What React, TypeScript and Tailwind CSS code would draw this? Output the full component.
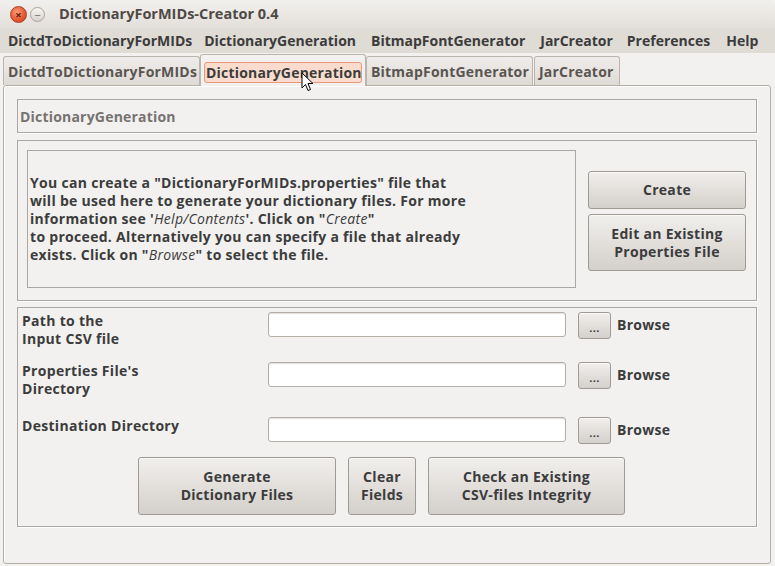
import React from "react";

const btn =
  "flex flex-col items-center justify-center rounded-[3px] border border-[#9f9a94] bg-gradient-to-b from-[#f1efed] to-[#d4d0cb] text-[#3c3c3c] font-bold text-[14px] tracking-[0.3px] leading-[18px] shadow-[inset_0_1px_0_#fbfaf9]";

const Field = ({ label }: { label: React.ReactNode }) => (
  <div className="flex items-start">
    <div className="w-[250px] pl-[4px] text-[14px] tracking-[0.3px] leading-[18px] font-bold text-[#3c3c3c]">{label}</div>
    <div className="w-[298px] h-[25px] rounded-[3px] border border-[#b5aea6] bg-white shadow-[inset_0_1px_1px_#e4e0dc]" />
    <div className={`${btn} ml-[12px] w-[33px] h-[27px] !text-[11px] !leading-[11px] pt-[4px]`}>...</div>
    <div className="ml-[6px] text-[14px] tracking-[0.3px] leading-[25px] font-bold text-[#3c3c3c]">Browse</div>
  </div>
);

export default function App() {
  return (
    <div className="relative w-[775px] h-[566px] overflow-hidden bg-[#f2f1f0] font-['Open_Sans',sans-serif] flex flex-col">
      {/* title bar */}
      <div className="h-[28px] flex items-center bg-gradient-to-b from-[#f2f0ee] to-[#e3dfda] rounded-tr-[6px]">
        <div className="ml-[10px] w-[17px] h-[17px] rounded-full border border-[#a8412a] bg-[radial-gradient(circle_at_40%_35%,#fb9a78,#e4572e_60%,#c9401d)] flex items-center justify-center text-[#5a2010] text-[11px] leading-none font-bold">×</div>
        <div className="ml-[3px] w-[15px] h-[15px] rounded-full border border-[#aaa39b] bg-gradient-to-b from-[#f7f6f4] to-[#d7d2cc] flex items-center justify-center text-[#6a645d] text-[11px] leading-none">−</div>
        <div className="ml-[14px] text-[14.5px] font-bold text-[#4f4a45]">DictionaryForMIDs-Creator 0.4</div>
      </div>
      {/* menu bar */}
      <div className="h-[25px] flex items-center bg-[#dfdbd5] text-[14px] font-bold text-[#3c3c3c]">
        <span className="ml-[8px]">DictdToDictionaryForMIDs</span>
        <span className="ml-[12px]">DictionaryGeneration</span>
        <span className="ml-[15px]">BitmapFontGenerator</span>
        <span className="ml-[15px]">JarCreator</span>
        <span className="ml-[14px]">Preferences</span>
        <span className="ml-[16px]">Help</span>
      </div>
      {/* tabs */}
      <div className="h-[32px] flex items-end pl-[3px] text-[14px] tracking-[0.2px] font-bold text-[#5a5550]">
        <div className="w-[197px] h-[29px] flex items-center pl-[4px] rounded-t-[3px] border border-b-0 border-[#bbb5ad] bg-gradient-to-b from-[#efedeb] to-[#dedad6]">DictdToDictionaryForMIDs</div>
        <div className="w-[166px] h-[32px] pt-[7px] px-[3px] rounded-t-[3px] border border-b-0 border-[#bbb5ad] bg-[#f2f1f0] relative top-[1px]">
          <div className="h-[21px] flex items-center pl-[1px] rounded-[3px] border border-[#e7997a] bg-[#f9dccd] text-[#3c3c3c]">DictionaryGeneration</div>
        </div>
        <div className="w-[167px] h-[29px] flex items-center pl-[4px] rounded-t-[3px] border border-b-0 border-[#bbb5ad] bg-gradient-to-b from-[#efedeb] to-[#dedad6]">BitmapFontGenerator</div>
        <div className="w-[86px] h-[29px] ml-[1px] flex items-center pl-[4px] rounded-t-[3px] border border-b-0 border-[#bbb5ad] bg-gradient-to-b from-[#efedeb] to-[#dedad6]">JarCreator</div>
      </div>
      {/* tab panel */}
      <div className="ml-[3px] mr-[4px] h-[479px] border border-[#b4aea6] rounded-[3px] shadow-[inset_1px_1px_0_#ffffff] px-[13px] pt-[13px]">
        <div className="h-[34px] border border-[#a9a8a6] shadow-[1px_1px_0_#ffffff] flex items-center pl-[2px] text-[14px] tracking-[0.2px] font-bold text-[#767370]">DictionaryGeneration</div>

        <div className="mt-[7px] h-[161px] border border-[#a9a8a6] shadow-[1px_1px_0_#ffffff] flex items-start pl-[9px] pt-[9px]">
          <div className="w-[549px] h-[138px] border border-[#a9a8a6] flex items-center pl-[2px] text-[14px] tracking-[0.3px] leading-[18px] font-bold text-[#3c3c3c]">
            <p>
              You can create a "DictionaryForMIDs.properties" file that<br />
              will be used here to generate your dictionary files. For more<br />
              information see '<i className="font-normal">Help/Contents</i>'. Click on "<i className="font-normal">Create</i>"<br />
              to proceed. Alternatively you can specify a file that already<br />
              exists. Click on "<i className="font-normal">Browse</i>" to select the file.
            </p>
          </div>
          <div className="ml-[12px] mt-[21px] flex flex-col gap-[5px]">
            <div className={`${btn} w-[158px] h-[38px]`}>Create</div>
            <div className={`${btn} w-[158px] h-[57px]`}>
              <span>Edit an Existing</span>
              <span>Properties File</span>
            </div>
          </div>
        </div>

        <div className="mt-[6px] h-[220px] border border-[#a9a8a6] shadow-[1px_1px_0_#ffffff] pt-[4px]">
          <Field label={<>Path to the<br />Input CSV file</>} />
          <div className="mt-[14px]">
            <Field label={<>Properties File's<br />Directory</>} />
          </div>
          <div className="mt-[19px]">
            <Field label="Destination Directory" />
          </div>
          <div className="mt-[13px] ml-[120px] flex gap-[12px]">
            <div className={`${btn} w-[198px] h-[58px]`}>
              <span>Generate</span>
              <span>Dictionary Files</span>
            </div>
            <div className={`${btn} w-[68px] h-[58px]`}>
              <span>Clear</span>
              <span>Fields</span>
            </div>
            <div className={`${btn} w-[197px] h-[58px]`}>
              <span>Check an Existing</span>
              <span>CSV-files Integrity</span>
            </div>
          </div>
        </div>
      </div>
      {/* mouse pointer */}
      <svg className="absolute left-[301px] top-[72px]" width="13" height="21" viewBox="0 0 13 21">
        <path d="M1 1 L1 16 L4.5 12.5 L7 18.5 L9.5 17.5 L7 11.5 L12 11.5 Z" fill="#ffffff" stroke="#000000" strokeWidth="1" strokeLinejoin="round" />
      </svg>
    </div>
  );
}
